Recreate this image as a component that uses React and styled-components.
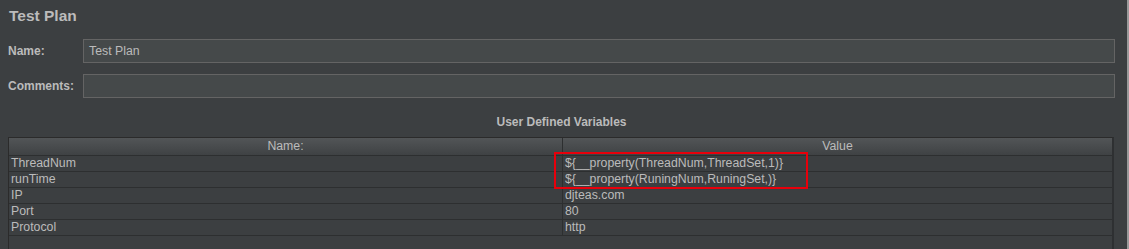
import React from "react";
import styled, { createGlobalStyle } from "styled-components";

const GlobalStyle = createGlobalStyle`
  html, body {
    margin: 0;
    padding: 0;
    background: #3c3f41;
  }
  body {
    font-family: "Liberation Sans", Arial, sans-serif;
    color: #bbbbbb;
  }
`;

const Frame = styled.div`
  width: 1129px;
  height: 249px;
  box-sizing: border-box;
  padding: 7px 12px 0 8px;
  border-right: 2px solid #9a9a9a;
  background: #3c3f41;
  overflow: hidden;
`;

const Title = styled.div`
  height: 18px;
  line-height: 18px;
  padding-left: 1px;
  font-size: 15.5px;
  font-weight: bold;
  color: #bbbbbb;
`;

const FieldRow = styled.div`
  display: grid;
  grid-template-columns: 75px 1fr;
  align-items: center;
  margin-top: ${(p) => p.$gap}px;
`;

const Label = styled.label`
  font-size: 12px;
  font-weight: bold;
  color: #bbbbbb;
`;

const Input = styled.div`
  height: 24px;
  box-sizing: border-box;
  border: 1px solid #646464;
  background: #45494a;
  padding-left: 5px;
  font-size: 12.3px;
  line-height: 22px;
  color: #bbbbbb;
`;

const SectionTitle = styled.div`
  margin-top: 15px;
  height: 18px;
  line-height: 18px;
  text-align: center;
  font-size: 12px;
  font-weight: bold;
  color: #bbbbbb;
  margin-bottom: 6px;
`;

const TableWrap = styled.div`
  position: relative;
  width: 1106px;
  height: 120px;
  box-sizing: border-box;
  border-left: 1px solid #2b2b2b;
  border-top: 1px solid #2b2b2b;
  border-right: 2px solid #2e3032;
  background: #3c3f41;
`;

const Row = styled.div`
  display: grid;
  grid-template-columns: 553px 1fr;
  height: ${(p) => (p.$head ? 18 : 16)}px;
  box-sizing: border-box;
  border-bottom: 1px solid #2d2f30;
  background: ${(p) =>
    p.$head ? "linear-gradient(#525557, #3f4244)" : "#3c3f41"};
`;

const Cell = styled.div`
  box-sizing: border-box;
  padding-left: 2px;
  font-size: 12.3px;
  line-height: 15px;
  color: #bbbbbb;
  white-space: nowrap;
  overflow: hidden;
  border-left: ${(p) => (p.$divider ? "1px solid #2d2f30" : "none")};
`;

const HeadCell = styled.div`
  text-align: center;
  font-size: 12.3px;
  line-height: 17px;
  color: #bbbbbb;
  border-left: ${(p) => (p.$divider ? "1px solid #2d2f30" : "none")};
`;

const Highlight = styled.div`
  position: absolute;
  left: 545px;
  top: 14px;
  width: 254px;
  height: 37px;
  box-sizing: border-box;
  border: 2px solid #e8000b;
  pointer-events: none;
`;

const rows = [
  ["ThreadNum", "${__property(ThreadNum,ThreadSet,1)}"],
  ["runTime", "${__property(RuningNum,RuningSet,)}"],
  ["IP", "djteas.com"],
  ["Port", "80"],
  ["Protocol", "http"],
];

export default function App() {
  return (
    <>
      <GlobalStyle />
      <Frame>
        <Title>Test Plan</Title>
        <FieldRow $gap={14}>
          <Label>Name:</Label>
          <Input>Test Plan</Input>
        </FieldRow>
        <FieldRow $gap={11}>
          <Label>Comments:</Label>
          <Input />
        </FieldRow>
        <SectionTitle>User Defined Variables</SectionTitle>
        <TableWrap>
          <Row $head>
            <HeadCell>Name:</HeadCell>
            <HeadCell $divider>Value</HeadCell>
          </Row>
          {rows.map(([name, value]) => (
            <Row key={name}>
              <Cell>{name}</Cell>
              <Cell $divider>{value}</Cell>
            </Row>
          ))}
          <Highlight />
        </TableWrap>
      </Frame>
    </>
  );
}
